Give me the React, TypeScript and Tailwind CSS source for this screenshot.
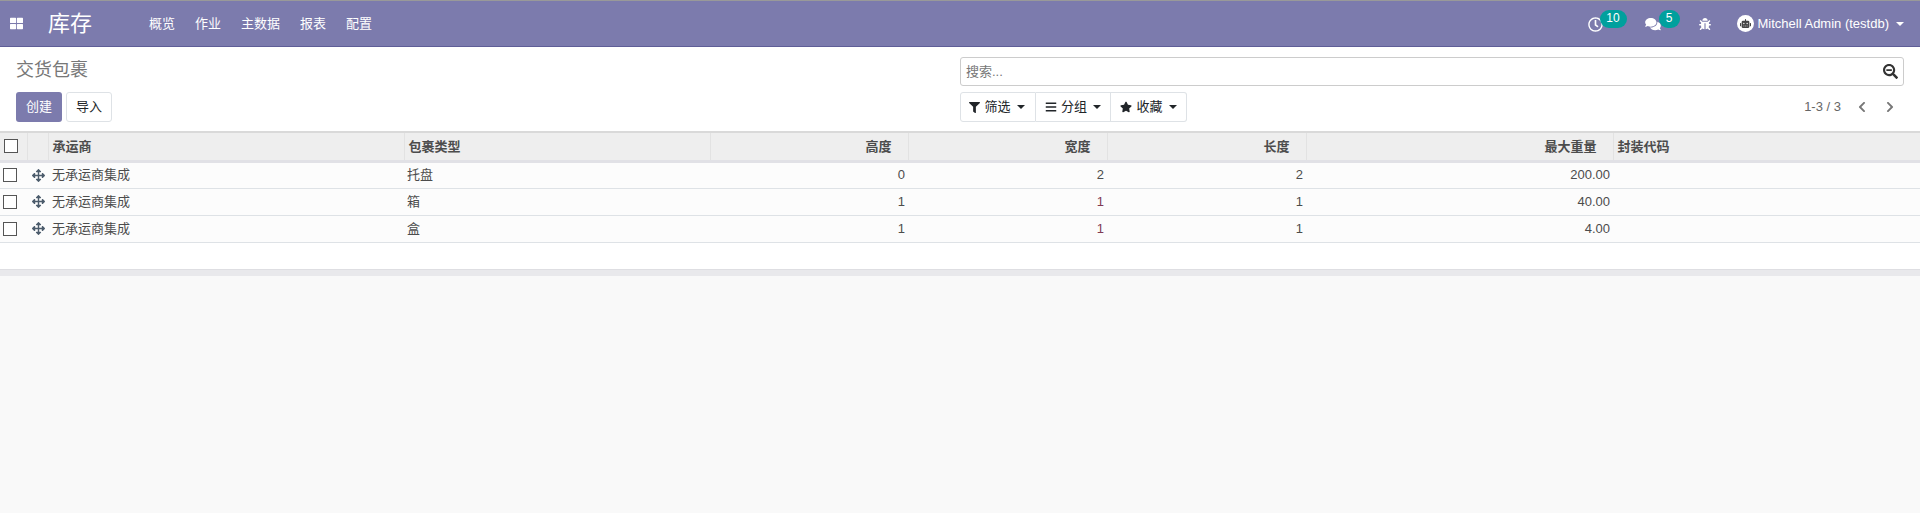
import React from "react";
import { FaThLarge, FaFilter, FaBars, FaStar, FaArrowsAlt, FaBug, FaComments, FaSearchMinus, FaChevronLeft, FaChevronRight, FaRobot, FaRegClock } from "react-icons/fa";

const font = "font-['Liberation_Sans','Noto_Sans_CJK_SC',sans-serif]";
const Caret = ({ cls = "ml-[7px]" }: { cls?: string }) => <span className={`inline-block ${cls} border-x-[4px] border-t-[4px] border-x-transparent border-t-current align-middle`} />;

function Check({ cls = "" }: { cls?: string }) {
  return <span className={`block w-[14px] h-[14px] border border-[#555] bg-white ${cls}`} />;
}

const rows = [
  { type: "托盘", h: "0", w: "2", l: "2", m: "200.00", red: false },
  { type: "箱", h: "1", w: "1", l: "1", m: "40.00", red: true },
  { type: "盒", h: "1", w: "1", l: "1", m: "4.00", red: true },
];

const th = "border-l border-[#e2e2e2] px-[4px] font-bold text-[13px] text-[#4c4c4c]";

export default function App() {
  return (
    <div className={`${font} min-h-[513px] bg-[#f9f9f9] text-[13px] text-[#4c4c4c] flex flex-col`}>
      <header className="h-[47px] bg-[#7c7bad] border-t border-t-[#999] border-b border-b-[#5f5e97] flex items-center text-white">
        <FaThLarge className="ml-[10px] w-[13px] h-[13px]" />
        <span className="ml-[25px] w-[101px] text-[22px] leading-none">库存</span>
        <nav className="flex gap-[20px] text-[13px]">
          <span>概览</span><span>作业</span><span>主数据</span><span>报表</span><span>配置</span>
        </nav>
        <div className="ml-auto flex items-center">
          <span className="relative w-[14px] h-[14px]">
            <FaRegClock className="w-[15px] h-[15px]" />
            <span className="absolute left-[12px] -top-[7px] h-[18px] w-[27px] rounded-full bg-[#00a09d] text-[12px] leading-[17px] text-center">10</span>
          </span>
          <span className="relative ml-[43px] w-[16px] h-[14px]">
            <FaComments className="w-[16px] h-[14px]" />
            <span className="absolute left-[14px] -top-[7px] h-[18px] w-[21px] rounded-full bg-[#00a09d] text-[12px] leading-[17px] text-center">5</span>
          </span>
          <FaBug className="ml-[38px] w-[12px] h-[12px]" />
          <span className="ml-[26px] w-[17px] h-[17px] rounded-full bg-white flex items-center justify-center">
            <FaRobot className="w-[11px] h-[11px] text-[#444]" />
          </span>
          <span className="ml-[4px]">Mitchell Admin (testdb)</span>
          <Caret />
          <span className="w-[16px]" />
        </div>
      </header>

      <div className="bg-white h-[86px] border-b-2 border-b-[#d9d9d9] flex pl-4 pr-[16px]">
        <div className="w-[944px]">
          <div className="mt-[11px] text-[18px] leading-[24px] text-[#777]">交货包裹</div>
          <div className="mt-[10px] flex gap-[4px]">
            <button className="h-[30px] w-[46px] rounded-[3px] bg-[#7c7bad] text-white">创建</button>
            <button className="h-[30px] w-[46px] rounded-[3px] bg-white border border-[#dee2e6] text-[#212529]">导入</button>
          </div>
        </div>
        <div className="flex-1">
          <div className="mt-[10px] h-[29px] border border-[#ccc] rounded-[3px] flex items-center pl-[5px] pr-[5px] text-[#777]">
            <span>搜索...</span>
            <FaSearchMinus className="ml-auto w-[15px] h-[15px] text-[#333]" />
          </div>
          <div className="mt-[6px] flex items-center">
            <div className="flex text-[#212529]">
              <button className="h-[30px] w-[76px] pr-[2px] border border-[#dee2e6] rounded-l-[3px] flex items-center justify-center"><FaFilter className="w-[11px] h-[11px] mr-[4px]" />筛选<Caret cls="ml-[6px]" /></button>
              <button className="h-[30px] w-[75px] border border-l-0 border-[#dee2e6] flex items-center justify-center"><FaBars className="w-[12px] h-[12px] mr-[4px]" />分组<Caret cls="ml-[6px]" /></button>
              <button className="h-[30px] w-[76px] border border-l-0 border-[#dee2e6] rounded-r-[3px] flex items-center justify-center"><FaStar className="w-[12px] h-[12px] mr-[4px]" />收藏<Caret cls="ml-[6px]" /></button>
            </div>
            <div className="ml-auto flex items-center text-[#666]">
              <span>1-3 / 3</span>
              <FaChevronLeft className="ml-[15px] w-[12px] h-[12px] text-[#777]" />
              <FaChevronRight className="ml-[16px] w-[12px] h-[12px] text-[#777]" />
              <span className="w-[8px]" />
            </div>
          </div>
        </div>
      </div>

      <div className="bg-white h-[136px]">
        <table className="w-full table-fixed border-collapse">
          <colgroup>
            <col className="w-[27px]" /><col className="w-[21px]" /><col className="w-[356px]" /><col className="w-[306px]" />
            <col className="w-[198px]" /><col className="w-[199px]" /><col className="w-[199px]" /><col className="w-[307px]" /><col />
          </colgroup>
          <thead>
            <tr className="h-[28px] bg-[#eeeeee] border-b-[3px] border-b-[#e1e1e6]">
              <th className="pl-[4px]"><Check /></th>
              <th className={th}></th>
              <th className={`${th} text-left`}>承运商</th>
              <th className={`${th} text-left`}>包裹类型</th>
              <th className={`${th} text-right pr-[16px]`}>高度</th>
              <th className={`${th} text-right pr-[16px]`}>宽度</th>
              <th className={`${th} text-right pr-[16px]`}>长度</th>
              <th className={`${th} text-right pr-[16px]`}>最大重量</th>
              <th className={`${th} text-left`}>封装代码</th>
            </tr>
          </thead>
          <tbody>
            {rows.map((r, i) => (
              <tr key={i} className="h-[27px] bg-[#fcfcfc] border-b border-b-[#dee2e6]">
                <td className="pl-[3px]"><Check /></td>
                <td className="pl-[5px]"><FaArrowsAlt className="w-[13px] h-[13px] text-[#4c5c6c]" /></td>
                <td className="pl-[4px]">无承运商集成</td>
                <td className="pl-[3px]">{r.type}</td>
                <td className="text-right pr-[3px]">{r.h}</td>
                <td className={`text-right pr-[3px] ${r.red ? "text-[#803a55]" : ""}`}>{r.w}</td>
                <td className="text-right pr-[3px]">{r.l}</td>
                <td className="text-right pr-[3px]">{r.m}</td>
                <td></td>
              </tr>
            ))}
          </tbody>
        </table>
      </div>
      <div className="h-[7px] bg-[#e9e9ec] border-t border-t-[#dedee2]" />
    </div>
  );
}
